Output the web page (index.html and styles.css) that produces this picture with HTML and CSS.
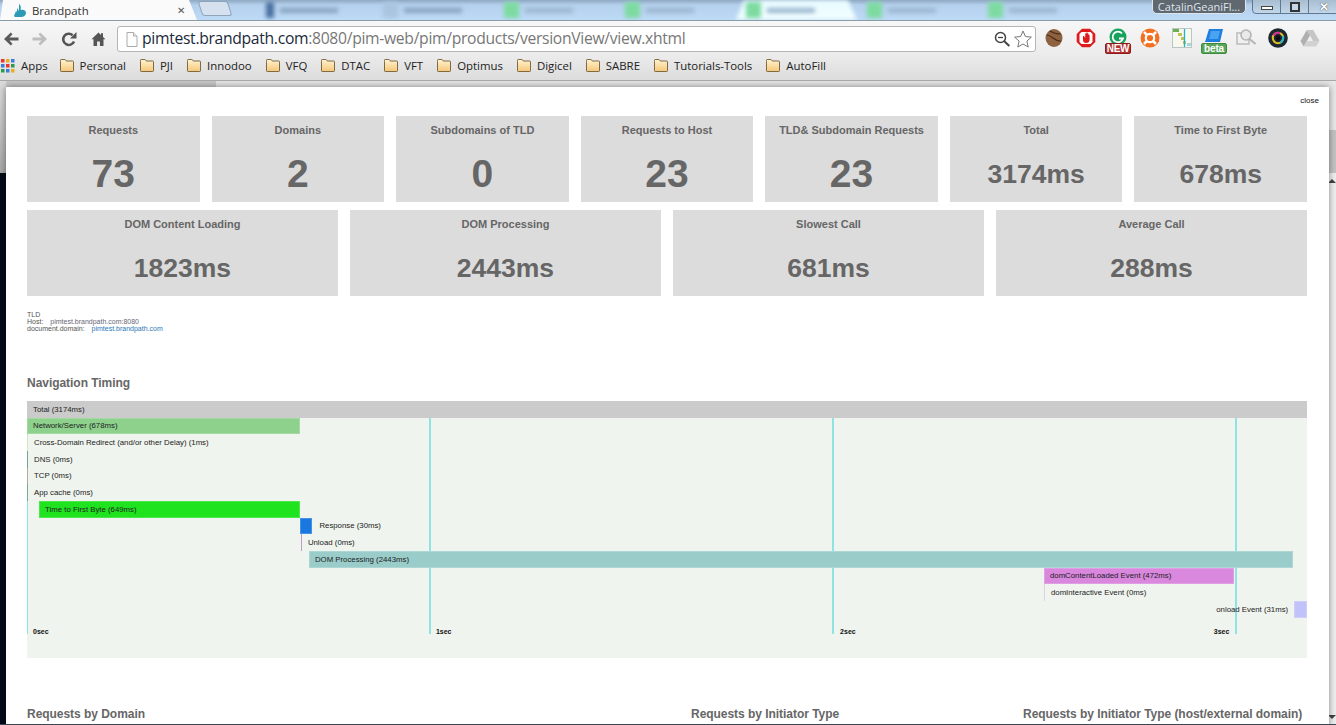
FILE: index.html
```html
<!DOCTYPE html>
<html lang="en">
<head>
<meta charset="utf-8">
<title>Brandpath</title>
<link rel="stylesheet" href="styles.css">
</head>
<body>
<svg class="defs" width="0" height="0" aria-hidden="true">
  <defs>
    <linearGradient id="fg" x1="0" y1="0" x2="0" y2="1"><stop offset="0" stop-color="#fff3d2"/><stop offset="1" stop-color="#f6c777"/></linearGradient>
    <symbol id="folder" viewBox="0 0 16 15"><path d="M1.5 3.5V2.2q0-.7.7-.7h3.6q.6 0 .9.6l.5.9h6.6q.7 0 .7.7v9.1q0 .7-.7.7H2.2q-.7 0-.7-.7z" fill="url(#fg)" stroke="#7f6a45"/></symbol>
  </defs>
</svg>
<header class="chrome">
  <div class="tabstrip">
    <div class="tab-active">
      <svg class="favicon" viewBox="0 0 12 14"><path d="M0 13l2-5 1 1V5l2 3V1c3 2 1 5 2 6 3-1 5 1 5 3s-2 4-5 4H1z" fill="#2b9bb5"/></svg>
      <span class="tab-title">Brandpath</span>
      <span class="tab-close">✕</span>
    </div>
    <div class="tab-new"></div>
    <div class="ghosts">
      <div class="ghost"><i class="gicon navy"></i><b></b></div>
      <div class="ghost"><i class="gicon pale"></i><b></b></div>
      <div class="ghost"><i class="gicon green"></i><b class="short"></b></div>
      <div class="ghost"><i class="gicon green"></i><b class="short"></b></div>
      <div class="ghost lit"><i class="gicon green"></i><b class="short"></b></div>
      <div class="ghost"><i class="gicon green"></i><b class="short"></b></div>
      <div class="ghost"><i class="gicon green"></i><b class="short"></b></div>
    </div>
    <div class="win-title">CatalinGeaniFl...</div>
    <div class="win-controls">
      <span class="wc"><i class="wc-min"></i></span>
      <span class="wc"><i class="wc-max"></i></span>
      <span class="wc wc-x">✕</span>
    </div>
  </div>
  <div class="toolbar">
    <svg class="nav back" viewBox="0 0 16 14"><path d="M15.500 5.500H6.500L9.500 2.300 7.800.6 1 7l6.800 6.400 1.700-1.700-3-3.200h9z" fill="#5a5a5a"/></svg>
    <svg class="nav fwd" viewBox="0 0 16 14"><path d="M.5 5.500h9L6.500 2.300 8.200.6 15 7l-6.800 6.400-1.700-1.700 3-3.200h-9z" fill="#bdbdbd"/></svg>
    <svg class="nav reload" viewBox="0 0 16 16"><path d="M13 10.500A5.600 5.600 0 1 1 11.600 4.200" fill="none" stroke="#555" stroke-width="2.600"/><path d="M15.500 1v6.500H9z" fill="#555"/></svg>
    <svg class="nav home" viewBox="0 0 15 14"><path d="M7.500 .5L.5 7.200h2V14h3.600V9.500h2.800V14h3.600V7.200h2L12 5V1.200H10V3z" fill="#555"/></svg>
    <div class="omnibox">
      <svg class="pageicon" viewBox="0 0 12 15"><path d="M1 .5h6.500L11 4v10.500H1z" fill="#fff" stroke="#aaa"/><path d="M7.500 .5V4H11" fill="#eee" stroke="#aaa"/></svg>
      <span class="url"><span class="url-host">pimtest.brandpath.com</span>:8080/pim-web/pim/products/versionView/view.xhtml</span>
      <svg class="zoomglass" viewBox="0 0 16 16"><circle cx="6.500" cy="6.500" r="5" fill="none" stroke="#444" stroke-width="1.500"/><path d="M4 6.500h5" stroke="#444" stroke-width="1.300"/><path d="M10.300 10.300l5 4.700" stroke="#444" stroke-width="2"/></svg>
      <svg class="star" viewBox="0 0 18 18"><path d="M9 1l2.400 5.500 6 .6-4.500 4 1.300 5.900L9 14l-5.200 3 1.300-5.900-4.500-4 6-.6z" fill="#fff" stroke="#777"/></svg>
    </div>
    <div class="extensions">
      <svg class="ext" viewBox="0 0 20 20"><ellipse cx="10" cy="10" rx="8.500" ry="9" fill="#8d6240"/><path d="M3 7c5 0 6 6 14 6M6 3c3 2 6 3 11 3" fill="none" stroke="#4b2c17" stroke-width="1.200"/></svg>
      <svg class="ext" viewBox="0 0 20 20"><path d="M6 .7h8L19.300 6v8L14 19.300H6L.7 14V6z" fill="#e01b1b"/><path d="M5.500 4h9l2 2v8l-2 2h-9l-2-2V6z" fill="#fff"/><path d="M7 8v4q0 3 3.200 3t3.400-3V7h-1v3V5.500h-1V10V4.500h-1.200V10V5.500H9.200V10L8 8z" fill="#e01b1b"/></svg>
      <span class="ext badged">
        <svg viewBox="0 0 20 20"><circle cx="10" cy="9" r="8.500" fill="#16a35b"/><path d="M14 5.500A5.300 5.300 0 1 0 15 10.500h-4" fill="none" stroke="#fff" stroke-width="1.800"/></svg>
        <span class="badge red">NEW</span>
      </span>
      <svg class="ext" viewBox="0 0 20 20"><circle cx="10" cy="10" r="9.500" fill="#f37021"/><circle cx="10" cy="10" r="4.200" fill="none" stroke="#fff" stroke-width="2.200"/><path d="M4 4l3 3M16 4l-3 3M4 16l3-3M16 16l-3-3" stroke="#fff" stroke-width="2.600"/></svg>
      <svg class="ext wide" viewBox="0 0 20 20"><rect x=".5" y=".5" width="19" height="19" fill="#f8f8ee" stroke="#b9c6c6"/><rect x="1" y="1" width="6" height="3" fill="#6ab04c"/><rect x="6" y="5" width="4" height="3" fill="#c3c25a"/><rect x="9" y="9" width="3" height="3" fill="#c3c25a"/><rect x="11" y="13" width="3" height="3" fill="#c3c25a"/><rect x="15" y="15" width="4" height="3" fill="#a8d8d8"/><path d="M12.500 1v18" stroke="#1fb5c8" stroke-width="1.300"/></svg>
      <span class="ext badged">
        <svg viewBox="0 0 20 20"><path d="M5 1h14l-3 13H1z" fill="#1e7fe0"/><path d="M7 3h9l-2 8H5z" fill="#4aa3f0"/></svg>
        <span class="badge green">beta</span>
      </span>
      <svg class="ext" viewBox="0 0 20 20"><rect x="1" y="5" width="12" height="11" fill="none" stroke="#c4c4c4" stroke-width="1.800"/><circle cx="10" cy="7" r="5" fill="#e9e9e9" stroke="#b5b5b5" stroke-width="1.600"/><path d="M13.500 11l6 5" stroke="#b5b5b5" stroke-width="2"/></svg>
      <svg class="ext" viewBox="0 0 20 20"><circle cx="10" cy="10" r="9.800" fill="#1d2730"/><circle cx="10" cy="10" r="5.200" fill="none" stroke="#e0c020" stroke-width="2"/><path d="M5.500 7.500A5.200 5.200 0 0 1 12 5.200" fill="none" stroke="#d3269a" stroke-width="2"/><path d="M14.800 8A5.200 5.200 0 0 1 12 14.800" fill="none" stroke="#20b8d0" stroke-width="2"/><circle cx="10" cy="10" r="2.400" fill="#0c0f14"/></svg>
      <svg class="ext" viewBox="0 0 20 18"><path d="M6.800 1h6.400l6.300 11h-6.400z" fill="#c6c6c6"/><path d="M6.800 1L.5 12l3.200 5.500L10 6.500z" fill="#b0b0b0"/><path d="M3.700 17.500h12.600l3.200-5.500H6.900z" fill="#d2d2d2"/></svg>
    </div>
  </div>
  <nav class="bookmarks">
    <span class="bm apps-item">
      <svg class="apps" viewBox="0 0 14 14"><g><rect width="3.500" height="3.500" fill="#e33"/><rect x="5" width="3.500" height="3.500" fill="#e8b020"/><rect x="10" width="3.500" height="3.500" fill="#3a7de0"/><rect y="5" width="3.500" height="3.500" fill="#3a7de0"/><rect x="5" y="5" width="3.500" height="3.500" fill="#e33"/><rect x="10" y="5" width="3.500" height="3.500" fill="#2a9a4a"/><rect y="10" width="3.500" height="3.500" fill="#2a9a4a"/><rect x="5" y="10" width="3.500" height="3.500" fill="#3a7de0"/><rect x="10" y="10" width="3.500" height="3.500" fill="#e8b020"/></g></svg>Apps</span>
    <span class="bm"><svg class="folder"><use href="#folder"/></svg>Personal</span>
    <span class="bm"><svg class="folder"><use href="#folder"/></svg>PJI</span>
    <span class="bm"><svg class="folder"><use href="#folder"/></svg>Innodoo</span>
    <span class="bm"><svg class="folder"><use href="#folder"/></svg>VFQ</span>
    <span class="bm"><svg class="folder"><use href="#folder"/></svg>DTAC</span>
    <span class="bm"><svg class="folder"><use href="#folder"/></svg>VFT</span>
    <span class="bm"><svg class="folder"><use href="#folder"/></svg>Optimus</span>
    <span class="bm"><svg class="folder"><use href="#folder"/></svg>Digicel</span>
    <span class="bm"><svg class="folder"><use href="#folder"/></svg>SABRE</span>
    <span class="bm"><svg class="folder"><use href="#folder"/></svg>Tutorials-Tools</span>
    <span class="bm"><svg class="folder"><use href="#folder"/></svg>AutoFill</span>
  </nav>
</header>
<main class="page">
  <div class="scrollbar"><i class="arrow up"></i><i class="arrow down"></i></div>
  <section class="modal">
    <a class="close">close</a>
    <div class="cards seven">
      <div class="card"><h3>Requests</h3><p class="big">73</p></div>
      <div class="card"><h3>Domains</h3><p class="big">2</p></div>
      <div class="card"><h3>Subdomains of TLD</h3><p class="big">0</p></div>
      <div class="card"><h3>Requests to Host</h3><p class="big">23</p></div>
      <div class="card"><h3>TLD&amp; Subdomain Requests</h3><p class="big">23</p></div>
      <div class="card"><h3>Total</h3><p class="ms">3174ms</p></div>
      <div class="card"><h3>Time to First Byte</h3><p class="ms">678ms</p></div>
    </div>
    <div class="cards four">
      <div class="card"><h3>DOM Content Loading</h3><p class="ms">1823ms</p></div>
      <div class="card"><h3>DOM Processing</h3><p class="ms">2443ms</p></div>
      <div class="card"><h3>Slowest Call</h3><p class="ms">681ms</p></div>
      <div class="card"><h3>Average Call</h3><p class="ms">288ms</p></div>
    </div>
    <div class="info">
      <div>TLD</div>
      <div>Host: <span class="val">pimtest.brandpath.com:8080</span></div>
      <div>document.domain: <span class="val blue">pimtest.brandpath.com</span></div>
    </div>
    <h2 class="section-title">Navigation Timing</h2>
    <div class="chart">
      <div class="ticks">
        <div class="tick tick-0"><span>0sec</span></div>
        <div class="tick tick-1"><span>1sec</span></div>
        <div class="tick tick-2"><span>2sec</span></div>
        <div class="tick tick-3"><span>3sec</span></div>
      </div>
      <div class="row"><div class="bar total" style="width:100%">Total (3174ms)</div></div>
      <div class="row"><div class="bar network" style="width:21.36%">Network/Server (678ms)</div></div>
      <div class="row"><i class="mark m-cross"></i><span class="label">Cross-Domain Redirect (and/or other Delay) (1ms)</span></div>
      <div class="row"><i class="mark m-dns"></i><span class="label">DNS (0ms)</span></div>
      <div class="row"><i class="mark m-tcp"></i><span class="label">TCP (0ms)</span></div>
      <div class="row"><i class="mark m-app"></i><span class="label">App cache (0ms)</span></div>
      <div class="row"><div class="bar ttfb" style="margin-left:0.94%;width:20.42%">Time to First Byte (649ms)</div></div>
      <div class="row"><div class="bar response" style="margin-left:21.3%;width:1%"></div><span class="label after">Response (30ms)</span></div>
      <div class="row"><i class="mark m-unload" style="margin-left:21.4%"></i><span class="label">Unload (0ms)</span></div>
      <div class="row"><div class="bar dom" style="margin-left:22.03%;width:76.88%">DOM Processing (2443ms)</div></div>
      <div class="row"><div class="bar loaded" style="margin-left:79.45%;width:14.85%">domContentLoaded Event (472ms)</div></div>
      <div class="row"><i class="mark m-inter" style="margin-left:79.45%"></i><span class="label">domInteractive Event (0ms)</span></div>
      <div class="row end"><span class="label before">onload Event (31ms)</span><div class="bar onload" style="width:1%"></div></div>
    </div>
    <div class="lower">
      <h2 class="section-title">Requests by Domain</h2>
      <h2 class="section-title">Requests by Initiator Type</h2>
      <h2 class="section-title">Requests by Initiator Type (host/external domain)</h2>
    </div>
  </section>
</main>
</body>
</html>
```

FILE: styles.css
```css
* { box-sizing: border-box; }
html, body { margin: 0; height: 100%; overflow: hidden; }
body { display: flex; flex-direction: column; width: 1336px; height: 725px; background: #fff; font-family: "Liberation Sans", Arial, sans-serif; border-bottom: 1px solid #3c4650; }
.defs { position: absolute; }

.chrome { flex: none; height: 81px; display: flex; flex-direction: column; }

.tabstrip { position: relative; height: 21px; display: flex; background: linear-gradient(#8fa8c2 0, #b4d0ec 5px, #bddaf6 100%); border-bottom: 1px solid #8a9ca8; overflow: hidden; }
.tab-active { flex: none; width: 197px; height: 20px; display: flex; align-items: center; padding: 0 9px 0 14px; background: #fafafa; clip-path: polygon(0 100%, 3px 0, 189px 0, 197px 100%); }
.favicon { width: 12px; height: 14px; margin-right: 6px; }
.tab-title { font: 11.400px "Open Sans", sans-serif; color: #333; flex: 1; }
.tab-close { font-size: 10px; color: #555; margin-right: 3px; }
.tab-new { flex: none; width: 30px; height: 15px; margin: 1px 0 0 3px; background: #d5e1ee; border: 1px solid #8ea4bb; border-radius: 3px; transform: skewX(18deg); }
.ghosts { flex: none; width: 880px; margin-left: 22px; display: flex; filter: blur(2px); }
.ghost { flex: none; width: 121px; height: 20px; display: flex; align-items: center; gap: 6px; padding-left: 10px; }
.ghost.lit { background: linear-gradient(#e8fbff, #f2ffff); clip-path: polygon(0 100%, 8px 0, 112px 0, 121px 100%); }
.gicon { width: 15px; height: 16px; display: block; }
.gicon.navy { width: 8px; background: #48709f; margin-left: 4px; }
.gicon.pale { background: #a9c5df; }
.gicon.green { background: #7ddba0; }
.ghost b { display: block; width: 58px; height: 5px; background: #88a3bf; }
.ghost b.short { width: 48px; background: #9bb6cf; }
.win-title { position: absolute; left: 1152px; top: -2px; width: 94px; height: 16px; border-radius: 0 0 5px 5px; border: 1px solid #dde6ee; background: #5f676f; color: #dfe6ee; font: 11px/16px "Open Sans", sans-serif; text-align: center; white-space: nowrap; }
.win-controls { position: absolute; left: 1252px; top: -1px; display: flex; height: 15px; border: 1px solid #62788e; border-radius: 0 0 4px 4px; background: linear-gradient(#a9bdd1, #c2d6ea); }
.wc { width: 28px; display: flex; align-items: center; justify-content: center; border-right: 1px solid #62788e; }
.wc-min { display: block; width: 12px; height: 4px; margin-top: 3px; background: #fff; border: 1px solid #444; }
.wc-max { display: block; width: 10px; height: 10px; background: #c5d6e8; border: 2px solid #333; }
.wc-x { width: 30px; border: 0; color: #fff; font-size: 12px; font-weight: bold; text-shadow: 0 0 1px #000; }

.toolbar { height: 33px; display: flex; align-items: center; padding: 3px 4px 0 3px; background: linear-gradient(#f7f7f7, #ececec); position: relative; }
.nav { flex: none; display: block; }
.back { width: 16px; height: 14px; }
.fwd { width: 16px; height: 14px; margin-left: 13px; }
.reload { width: 16px; height: 16px; margin-left: 13px; }
.home { width: 15px; height: 14px; margin-left: 14px; }
.omnibox { flex: none; width: 919px; height: 26px; margin-left: 11px; display: flex; align-items: center; padding: 0 0 0 8px; background: #fff; border: 1px solid #b5b5b5; border-radius: 3px; }
.pageicon { width: 12px; height: 15px; flex: none; }
.url { flex: 1; margin-left: 4px; margin-top: -2px; font: 15.700px "Open Sans", sans-serif; color: #777; white-space: nowrap; letter-spacing: -0.31px; }
.url-host { color: #1a2a3a; }
.zoomglass { width: 16px; height: 16px; flex: none; margin-right: 4px; }
.star { width: 18px; height: 18px; flex: none; margin-right: 3px; }
.extensions { flex: none; display: flex; align-items: flex-start; position: absolute; left: 1008px; top: 7px; padding-left: 36px; }
.ext { flex: none; width: 20px; height: 20px; margin-right: 12px; position: relative; display: block; }
.ext svg { width: 20px; height: 20px; display: block; }
.badge { position: absolute; left: -3px; top: 15px; width: 26px; height: 11px; border-radius: 2px; color: #fff; font: bold 10px/10px "Liberation Sans", sans-serif; text-align: center; letter-spacing: -0.2px; }
.badge.red { background: #b3302e; border: 1px solid #8a1c1c; }
.badge.green { background: #5aa65a; border: 1px solid #3f8a3f; }

.bookmarks { height: 27px; display: flex; align-items: center; gap: 13px; padding: 0 0 3px 1px; background: linear-gradient(#ececec, #dcdcdc); border-bottom: 1px solid #a8a8a8; }
.bm { display: flex; align-items: center; font: 11.400px "Open Sans", sans-serif; color: #222; white-space: nowrap; }
.apps-item { margin-right: -2px; }
.apps { width: 14px; height: 14px; margin-right: 6px; }
.folder { width: 16px; height: 15px; margin-right: 5px; }

.page { position: relative; flex: 1; min-height: 0; overflow: hidden;
  background:
    linear-gradient(#dcdcdc, #a9a9a9) 0 0 / 6px 92px no-repeat,
    linear-gradient(90deg, #c8c8c8 216px, #e6e6e6 216px) 0 0 / 100% 6px no-repeat,
    #050a1a; }
.scrollbar { position: absolute; right: 0; top: 0; bottom: 0; width: 7px; background: linear-gradient(#e8e8e8 49px, #c4c4c4 49px, #c4c4c4 92px, #f0f0f0 92px); }
.arrow { position: absolute; right: 0; width: 0; height: 0; border-left: 4px solid transparent; border-right: 4px solid transparent; }
.arrow.up { top: 98px; border-bottom: 4px solid #444; }
.arrow.down { bottom: 5px; border-top: 4px solid #444; }

.modal { position: absolute; left: 6px; top: 6px; width: 1323px; height: 640px; padding: 29px 22px 0 21px; background: #fff; box-shadow: 0 0 7px rgba(0,0,0,.45); }
.close { position: absolute; top: 9px; right: 10px; font-size: 8px; line-height: 10px; color: #111; }
.cards { display: grid; gap: 12px; height: 86px; margin-bottom: 8px; }
.cards.seven { grid-template-columns: repeat(7, 1fr); }
.cards.four { grid-template-columns: repeat(4, 1fr); gap: 12px; }
.card { height: 86px; padding-top: 8px; background: #dcdcdc; color: #666; text-align: center; overflow: hidden; }
.card h3 { margin: 0; font-size: 11px; line-height: 13px; font-weight: bold; }
.card p { margin: 0; font-weight: bold; }
.big { font-size: 39px; line-height: 46px; padding-top: 14px; }
.ms { font-size: 26.500px; line-height: 32px; padding-top: 21px; }

.info { margin-top: 15px; height: 21px; font-size: 7px; line-height: 7px; color: #555; }
.val { margin-left: 5px; color: #667; }
.val.blue { color: #2a77b8; }

.section-title { margin: 0; font-size: 12px; line-height: 14px; font-weight: bold; color: #666; letter-spacing: -0.04px; }
.info + .section-title { margin-top: 44px; margin-bottom: 11px; }

.chart { position: relative; height: 257px; background: #eff4ee; }
.ticks { position: absolute; left: 0; right: 0; top: 16px; height: 217px; }
.tick { position: absolute; top: 0; bottom: 0; width: 1px; background: #8fe3e3; }
.tick span { position: absolute; bottom: -2px; left: 6px; font-size: 7px; line-height: 9px; font-weight: bold; color: #111; }
.tick-0 { left: 0; }
.tick-1 { left: 31.4%; width: 2px; }
.tick-2 { left: 62.9%; width: 2px; }
.tick-3 { left: 94.4%; width: 2px; }
.tick-1 span { left: 7px; }
.tick-2 span { left: 8px; }
.tick-3 span { left: auto; right: 8px; }

.row { position: relative; height: 16.670px; display: flex; align-items: stretch; font-size: 7.800px; color: #222; white-space: nowrap; }
.row.end { justify-content: flex-end; }
.bar { flex: none; display: flex; align-items: center; padding-left: 5px; border: 1px solid rgba(255,255,255,.2); overflow: visible; }
.total { background: #cbcbcb; border: 0; padding-left: 6px; }
.network { background: #8dd18d; }
.ttfb { background: #1fe31f; }
.response { background: #1a77e0; padding: 0; }
.dom { background: #9accca; }
.loaded { background: #d988de; }
.onload { background: #c2c2fb; }
.mark { flex: none; width: 1px; display: block; }
.m-cross { background: #cfe8c0; }
.m-dns { background: #6fa89c; }
.m-tcp { background: #b3ab96; }
.m-app { background: #6fae94; }
.m-unload { background: #c39ac8; }
.m-inter { background: #d8d8dc; }
.label { display: flex; align-items: center; padding-left: 6px; }
.label.after { padding-left: 7px; }
.label.before { padding: 0 6px 0 0; }

.lower { display: grid; grid-template-columns: 664px 332px 1fr; margin-top: 49px; }
```
